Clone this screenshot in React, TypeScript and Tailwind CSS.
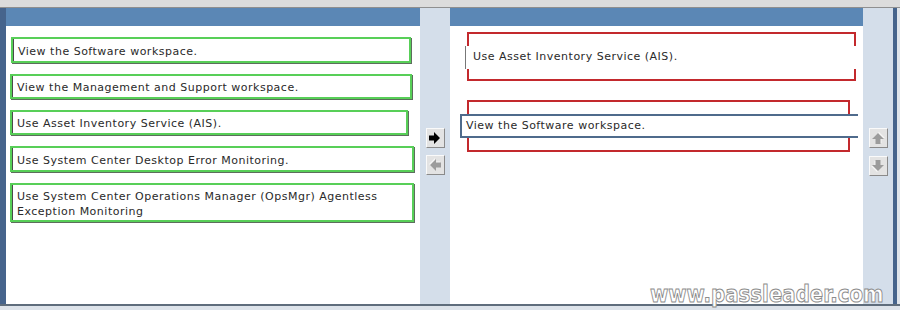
import type { ReactNode } from "react";

type Dir = "right" | "left" | "up" | "down";

const leftItems = [
  { text: "View the Software workspace.", w: "w-[400px]", ml: "ml-[5px]", h: "h-[26px]" },
  { text: "View the Management and Support workspace.", w: "w-[402px]", ml: "ml-[4px]", h: "h-[25px]" },
  { text: "Use Asset Inventory Service (AIS).", w: "w-[398px]", ml: "ml-[4px]", h: "h-[25px]" },
  { text: "Use System Center Desktop Error Monitoring.", w: "w-[404px]", ml: "ml-[4px]", h: "h-[26px]" },
  {
    text: "Use System Center Operations Manager (OpsMgr) Agentless Exception Monitoring",
    w: "w-[404px]",
    ml: "ml-[4px]",
    h: "h-[39px]",
  },
];

// block arrow, drawn pointing right and rotated for the others
const ArrowIcon = ({ dir, active }: { dir: Dir; active: boolean }) => {
  const rot = { right: 0, left: 180, up: 270, down: 90 }[dir];
  return (
    <svg width="14" height="14" viewBox="0 0 14 14" style={{ transform: `rotate(${rot}deg)` }}>
      {!active && <polygon points="2,5.5 7,5.5 7,2 13,8 7,14 7,10.5 2,10.5" fill="#f6f6f6" />}
      <polygon
        points="1,4.5 6,4.5 6,1 12,7 6,13 6,9.5 1,9.5"
        fill={active ? "#000" : "#9c9c9c"}
      />
    </svg>
  );
};

const ArrowButton = ({ dir, active = false }: { dir: Dir; active?: boolean }) => (
  <div className="w-[19px] h-[20px] flex items-center justify-center bg-[#e3e3e3] border border-t-[#fafafa] border-l-[#fafafa] border-r-[#8a8a8a] border-b-[#8a8a8a]">
    <ArrowIcon dir={dir} active={active} />
  </div>
);

const RedSlot = ({ w, h, children }: { w: string; h: string; children: ReactNode }) => (
  <div className={`${w} ${h} border-2 border-[#c3292d] flex items-center`}>{children}</div>
);

export default function App() {
  return (
    <div className="relative w-[900px] h-[310px] overflow-hidden bg-[#dde3ea] font-['DejaVu_Sans',Verdana,sans-serif] text-[11px] tracking-[0.5px] text-[#2a2a2a]">
      {/* top strip */}
      <div className="h-[8px] bg-[#dcdcdc] border-b border-[#8f8f8f]" />

      <div className="flex h-[296px]">
        <div className="w-[6px] bg-[#46648c]" />

        {/* source list */}
        <div className="w-[414px] flex flex-col bg-white">
          <div className="h-[18px] bg-[#5b87b5]" />
          <div className="flex flex-col gap-[11px] pt-[11px]">
            {leftItems.map((it) => (
              <div
                key={it.text}
                className={`${it.w} ${it.ml} ${it.h} flex items-center pt-[2px] pl-[5px] pr-[4px] leading-[15px] bg-white border-2 border-[#58cf58] shadow-[inset_1px_0_0_#4a4a4a,1px_1px_0_#5d6d5d]`}
              >
                {it.text}
              </div>
            ))}
          </div>
        </div>

        {/* move buttons */}
        <div className="w-[30px] bg-[#d4deea] flex flex-col items-center pt-[120px] gap-[7px]">
          <ArrowButton dir="right" active />
          <ArrowButton dir="left" />
        </div>

        {/* answer area */}
        <div className="w-[413px] flex flex-col bg-white">
          <div className="h-[18px] bg-[#5b87b5]" />
          <div className="flex flex-col gap-[19px] pt-[6px] pl-[17px]">
            <RedSlot w="w-[389px]" h="h-[49px]">
              <div className="-mx-[4px] mt-[2px] flex-1 h-[23px] flex items-center pl-[7px] bg-white border-l border-[#777]">
                Use Asset Inventory Service (AIS).
              </div>
            </RedSlot>
            <RedSlot w="w-[383px]" h="h-[52px]">
              <div className="-ml-[9px] w-[398px] shrink-0 h-[24px] flex items-center pl-[4px] bg-white border-2 border-r-0 border-[#4f6b8c]">
                View the Software workspace.
              </div>
            </RedSlot>
          </div>
        </div>

        {/* order buttons */}
        <div className="w-[30px] bg-[#d4deea] flex flex-col items-center pt-[120px] gap-[8px]">
          <ArrowButton dir="up" />
          <ArrowButton dir="down" />
        </div>

        <div className="w-[4px] bg-[#46648c]" />
        <div className="flex-1 bg-[#dfe4ea]" />
      </div>

      <div className="h-[2px] bg-[#5f6d7c]" />

      {/* watermark */}
      <div className="absolute left-[650px] top-[283px] origin-left scale-x-[0.86] text-[23px] leading-none font-bold tracking-normal text-white [-webkit-text-stroke:1px_#8c8c8c] font-['DejaVu_Sans',sans-serif]">
        www.passleader.com
      </div>
    </div>
  );
}
